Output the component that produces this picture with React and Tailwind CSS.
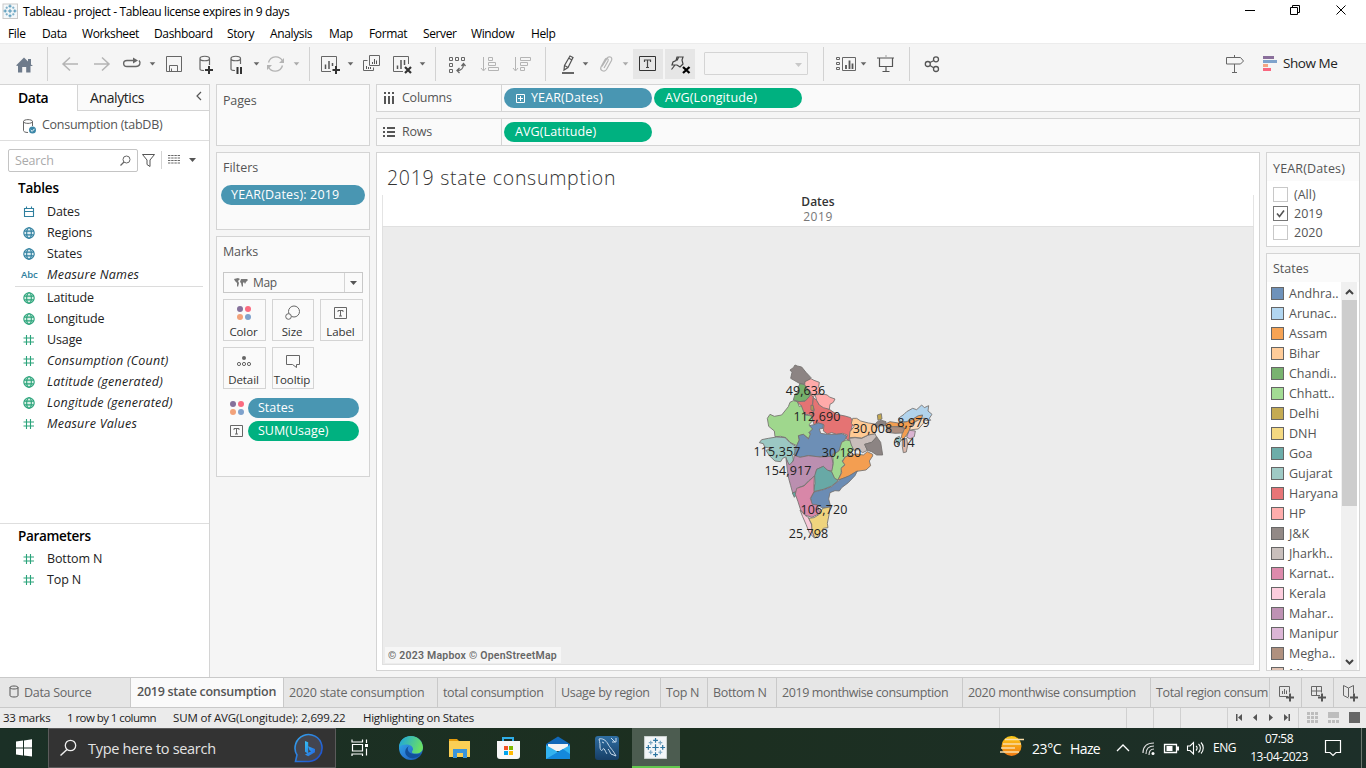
import React from "react";

/* A fixed-size drawing strip whose user units are window pixels. */
function Slice({ x, y, w, h, children, className = "" }) {
  return (
    <svg width={w} height={h} viewBox={`${x} ${y} ${w} ${h}`} fill="none" className={`block shrink-0 ${className}`}>
      {children}
    </svg>
  );
}

const Bar = (p) => <Slice y={43} h={41} {...p} />;
const Caret = ({ x, y = 62, c = "#666" }) => <path d={`M${x + 0.7} ${y + 0.3}h5.600l-2.800 3.300z`} fill={c} />;
const Sep = ({ x }) => <path d={`M${x + 0.5} 47v34`} stroke="#d2d2d2" />;

function TitleBar() {
  return (
    <header className="flex h-6 shrink-0 items-center bg-white">
      <Slice x={0} y={0} w={23} h={24}>
        <rect x="3" y="4" width="14.5" height="14.5" fill="#f4f8fa" stroke="#c9c9c9" />
        <Sparkle cx={10} cy={11} s={0.27} c="#2c7fa8" />
      </Slice>
      <h1 className="grow whitespace-pre text-[12px] leading-6 tracking-[-0.37px] text-black">Tableau - project - Tableau license expires in 9 days</h1>
      <Slice x={1230} y={0} w={136} h={24}>
        <path d="M1245 10.5h10" stroke="#000" />
        <path d="M1290.500 7.500h7v7h-7zM1292.500 7v-1.500h7v7h-2" stroke="#000" />
        <path d="M1336.500 5.500l9 9m0-9l-9 9" stroke="#000" />
      </Slice>
    </header>
  );
}

function Sparkle({ cx, cy, s, c }) {
  return (
    <g transform={`translate(${cx} ${cy}) scale(${s})`} stroke={c} strokeWidth="3">
      <path d="M-8 0h16M0-8v16M-6-18h12M0-24v12M-6 18h12M0 12v12M-24 0h12M-18-6v12M12 0h12M18-6v12" />
      <path d="M-17-12h10M-12-17v10M7-12h10M12-17v10M-17 12h10M-12 7v10M7 12h10M12 7v10" opacity=".6" />
    </g>
  );
}

const menus = [
  ["File", "w-[34px]"], ["Data", "w-10"], ["Worksheet", "w-[72px]"], ["Dashboard", "w-[73px]"], ["Story", "w-[43px]"],
  ["Analysis", "w-[59px]"], ["Map", "w-10"], ["Format", "w-[54px]"], ["Server", "w-12"], ["Window", "w-[60px]"], ["Help", "w-10"],
];

function MenuBar() {
  return (
    <nav className="flex h-[19px] shrink-0 bg-white pl-2 text-[12px] leading-[19px] tracking-[-0.37px] text-black">
      {menus.map(([m, w]) => <span key={m} className={`shrink-0 ${w}`}>{m}</span>)}
    </nav>
  );
}

function Toolbar() {
  return (
    <div className="flex h-[41px] shrink-0 border-t border-[#ececec] bg-[#f5f5f5] [&>svg]:-mt-px">
      <Bar x={0} w={48}>
        <path d="M16 65.500L24 57.500l4 4V59h3v5.500l2 1.500h-2.500v6.500h-4.300V67h-4v5.500H18V66z" fill="#6e7b8b" />
        <Sep x={47} />
      </Bar>
      <Bar x={48} w={112}>
        <path d="M78 64H63m7-6.500L63 64l7 6.500M94 64h15m-7-6.500l7 6.500-7 6.500" stroke="#b4b4b4" strokeWidth="1.500" />
        <path d="M134 60.500h-7c-4.500 0-4.500 6 0 6h9c4 0 5-4 3-6" stroke="#666" strokeWidth="1.400" />
        <path d="M133 57.500l5 3-5 3z" fill="#666" />
        <Caret x={149} />
      </Bar>
      <Bar x={160} w={150}>
        <path d="M166.500 56.500h15v15h-15zM169.500 71v-5.500h8V71M171.500 68.500v2.500" stroke="#666" />
        <path d="M204 70.500c-2.500 0-4-.5-4-1.500V58.500c0-3 9.500-3 9.500 0V65M200 58.500c0 3 9.500 3 9.500 0" stroke="#666" strokeWidth="1.200" />
        <path d="M205 70h8m-4-4v8" stroke="#333" strokeWidth="2" />
        <path d="M235 70.500c-2.500 0-4-.5-4-1.500V58.500c0-3 9.500-3 9.500 0V64M231 58.500c0 3 9.500 3 9.500 0" stroke="#666" strokeWidth="1.200" />
        <path d="M237.500 67v7m3.500-7v7" stroke="#333" strokeWidth="2" />
        <Caret x={253} />
        <path d="M268.500 62.500c2-7 11-7.500 14-1.500m0 4.500c-2 7-11 7.500-14 1.500" stroke="#b4b4b4" strokeWidth="1.400" />
        <path d="M284 58v5h-5zM267 70v-5h5z" fill="#b4b4b4" />
        <Caret x={293} c="#aaa" />
        <Sep x={309} />
      </Bar>
      <Bar x={310} w={126}>
        <path d="M331 71.500h-9.500v-15h15V66" stroke="#666" />
        <path d="M325.500 69v-4.500m3.500 4.500v-8m3.500 5v-3" stroke="#555" strokeWidth="1.500" />
        <path d="M332.500 70h7.500m-4-4v8" stroke="#333" strokeWidth="2" />
        <Caret x={347} />
        <path d="M369.500 55.500h10v10h-10zM367.500 60.500h-4v10h10v-3" stroke="#666" />
        <path d="M372.500 64v-2m2 2v-5m2 5v-3.500M366.500 69v-3m2 3v-2m2 2v-2" stroke="#555" />
        <path d="M403 71.500h-9.500v-15h15V64" stroke="#666" />
        <path d="M397.500 69v-3.500m3.500 3.500v-9m3.500 5v-5" stroke="#555" strokeWidth="1.500" />
        <path d="M405 67l6 6m0-6l-6 6" stroke="#333" strokeWidth="2.200" />
        <Caret x={419} />
        <Sep x={435} />
      </Bar>
      <Bar x={436} w={110}>
        <path d="M449.500 57.500h3v3h-3zM455.500 57.500h3v3h-3zM461.500 57.500h3v3h-3zM449.500 63.500h3v3h-3zM449.500 69.500h3v3h-3z" stroke="#666" />
        <path d="M463.500 64c0 4-2.500 6.500-6 6.500m4-4.500l2-2.500 2 2.500m-6 2l-2.500 2.500 2.500 2.500" stroke="#666" strokeWidth="1.300" />
        <path d="M483.500 57v13m-2.500-2l2.500 3 2.500-3M488.500 57.500h4v3h-4zM488.500 62.500h7v3h-7zM488.500 67.500h10v3h-10z" stroke="#b4b4b4" />
        <path d="M515.500 57v13m-2.500-2l2.500 3 2.500-3M520.500 57.500h10v3h-10zM520.500 62.500h7v3h-7zM520.500 67.500h4v3h-4z" stroke="#b4b4b4" />
        <Sep x={545} />
      </Bar>
      <Bar x={546} w={87}>
        <path d="M570 56l3 1.500-5 10-4 2.500.5-4.500zM564.500 65.500l3.500 2M568.500 58l3.500 2" stroke="#555" strokeWidth="1.200" />
        <path d="M562 73h12" stroke="#666" strokeWidth="2" />
        <Caret x={582} />
        <path d="M602 66.500l5-8c1.500-3 6-1.500 4.500 2l-5 9c-2 3-7 1-5.500-2.500l4-7.500c1.500-2 4-1 3 1.500l-4 7" stroke="#b4b4b4" strokeWidth="1.200" />
        <Caret x={622} c="#aaa" />
      </Bar>
      <Bar x={633} w={71}>
        <path d="M633 49h30v30h-30zM665 49h30v30h-30z" fill="#e6e6e6" />
        <path d="M639.500 56.500h16v14h-16z" stroke="#333" />
        <path d="M644.500 62v-2h6v2m-3-2v7.500m-1.500 0h3" stroke="#444" strokeWidth="1.200" />
        <path d="M677 57h6l-1 3 1 4-3 3-3-2h-5l1-3 3-1.500zM675 65l-3.500 4.500M678.500 57.500l-1.500 3" stroke="#444" strokeWidth="1.200" />
        <path d="M683 67l6.500 6m0-6l-6.500 6" stroke="#e6e6e6" strokeWidth="5" />
        <path d="M683 67l6.500 6m0-6l-6.500 6" stroke="#000" strokeWidth="2.300" />
      </Bar>
      <div className="mt-[8px] flex h-[23px] w-[104px] shrink-0 rounded-[1px] border border-[#d4d4d4] bg-[#f5f5f5]">
        <Slice x={705} y={52} w={102} h={22}><path d="M795 62h7l-3.500 4z" fill="#c8c8c8" /></Slice>
      </div>
      <Bar x={808} w={102}>
        <Sep x={823} />
        <path d="M836.500 57.500h3v2h-3zM836.500 62.500h3v2h-3zM836.500 67.500h3v2h-3zM842.500 57.500h13v13h-13z" stroke="#666" />
        <path d="M846 69v-4m3.500 4v-8.500m3 8.500v-5.500" stroke="#555" strokeWidth="1.800" />
        <Caret x={860} />
        <path d="M877 58h17M879.500 58v8.500h13V58M886 67v4.500M882.500 71.500h7M885.500 56h1" stroke="#555" strokeWidth="1.200" />
        <Sep x={909} />
      </Bar>
      <Bar x={910} w={372} className="mr-[1px]">
        <path d="M930 62.500l4-2M930 65.500l4 2.500" stroke="#555" strokeWidth="1.300" />
        <circle cx="927.800" cy="64" r="2.500" stroke="#555" strokeWidth="1.300" />
        <circle cx="936" cy="59.300" r="2.500" stroke="#555" strokeWidth="1.300" />
        <circle cx="936" cy="69" r="2.500" stroke="#555" strokeWidth="1.300" />
        <path d="M1226.500 57.500h14l3 3.500-3 3h-14zM1234.500 55v2M1234.500 64v8M1232 72.500h5" stroke="#666" />
        <path d="M1263 56h11v3h-11z" fill="#8a6f9b" />
        <path d="M1263 60h14v3h-14z" fill="#7fa3cc" />
        <path d="M1263 64h5v3h-5z" fill="#f4a582" />
        <path d="M1263 68h8v3h-8z" fill="#f9677f" />
      </Bar>
      <span className="text-[13.5px] leading-[39px] tracking-[-0.45px] whitespace-nowrap text-[#222]">Show Me</span>
    </div>
  );
}

const BLUE = "#2f7f9e";
const GREEN = "#2aa37a";

function FieldIcon({ kind, green }) {
  const c = green ? GREEN : BLUE;
  if (kind === "abc") return <span className="w-[26px] shrink-0 text-[9.5px] font-semibold tracking-[-0.1px] text-[#2f7f9e]">Abc</span>;
  return (
    <svg width="12" height="12" viewBox="0 0 12 12" fill="none" stroke={c} strokeWidth="1.100" className="-mt-px mr-[12px] ml-[2px] shrink-0">
      {kind === "date" && <path d="M1.500 2.500h9v8h-9zM1.500 5.500h9M3.500.5v2M8.500.5v2" />}
      {kind === "globe" && <><circle cx="6" cy="6" r="5.200" fill={green ? "#d9f0e5" : "#dcecf2"} /><ellipse cx="6" cy="6" rx="2.300" ry="5.200" /><path d="M1.200 4.100h9.600M1.200 7.900h9.600" /></>}
      {kind === "hash" && <path d="M3.500 1v10M7.500 1v10M.5 4h10.500M.5 8h10.500" />}
    </svg>
  );
}

function Field({ kind, green, italic, children }) {
  return (
    <li className="flex h-[21px] items-center pl-[21px]">
      <FieldIcon kind={kind} green={green} />
      <span className={italic ? "tracking-[0.24px] italic" : "tracking-[-0.12px]"}>{children}</span>
    </li>
  );
}

function DataPane() {
  return (
    <aside className="flex w-[210px] shrink-0 flex-col border-t border-r border-[#d4d4d4] bg-white text-[12.5px] text-[#222]">
      <div className="flex h-[26px] shrink-0">
        <div className="w-[77px] pl-[18px] text-[14px] leading-[26px] font-semibold tracking-[-0.5px] text-black">Data</div>
        <div className="flex grow items-center border-b border-l border-[#d4d4d4] bg-[#fafafa] pl-[12px] text-[14px] tracking-[-0.4px]">
          <span className="grow">Analytics</span>
          <svg width="14" height="12" viewBox="0 0 14 12" fill="none" className="-mt-[3px] mr-[1px] shrink-0"><path d="M7 2L3 6l4 4" stroke="#555" strokeWidth="1.200" /></svg>
        </div>
      </div>
      <div className="flex h-[30px] shrink-0 items-center border-b border-[#dedede] pl-[22px] text-[12.5px] tracking-[-0.27px] text-[#555]">
        <svg width="15" height="16" viewBox="0 0 15 16" fill="none" className="mr-[5px]">
          <path d="M6 14.500c-3 0-4.500-1-4.500-2V3.500c0-2.500 9-2.500 9 0V8M1.500 3.500c0 2.500 9 2.500 9 0" stroke="#666" />
          <circle cx="10.500" cy="12" r="3.500" fill="#3b87a8" /><path d="M8.700 12l1.500 1.400 2.300-2.600" stroke="#fff" />
        </svg>
        Consumption (tabDB)
      </div>
      <div className="flex h-[37px] shrink-0 pt-[8px] pl-2">
        <div className="flex h-[23px] w-[130px] shrink-0 items-center justify-between rounded-[2px] border border-[#c4c4c4] pr-[6px] pl-[6px] tracking-[-0.15px] text-[#aaa]">
          <span className="pt-px">Search</span>
          <svg width="11" height="12" viewBox="0 0 11 12" fill="none" stroke="#666"><circle cx="6.500" cy="4.500" r="3.500" /><path d="M4 7L.5 10.500" strokeWidth="1.300" /></svg>
        </div>
        <Slice x={138} y={149} w={72} h={23}>
          <path d="M142.500 154.500h12l-4.500 5.500v6.500l-3-2v-4.500z" stroke="#555" />
          <path d="M161.500 151v18" stroke="#d4d4d4" />
          <path d="M168 155.500h12M168 158h12M168 160.500h12M168 163h12" stroke="#666" strokeDasharray="2.400 .8" />
          <path d="M189 158h7l-3.500 4z" fill="#555" />
        </Slice>
      </div>
      <h2 className="shrink-0 pl-[18px] text-[13.500px] leading-[21px] font-semibold tracking-[-0.2px] text-black">Tables</h2>
      <ul className="shrink-0 pt-[3px]">
        <Field kind="date">Dates</Field>
        <Field kind="globe">Regions</Field>
        <Field kind="globe">States</Field>
        <Field kind="abc" italic>Measure Names</Field>
      </ul>
      <div className="mr-[6px] ml-[15px] h-px shrink-0 bg-[#dcdcdc]" />
      <ul className="grow pt-[1px]">
        <Field kind="globe" green>Latitude</Field>
        <Field kind="globe" green>Longitude</Field>
        <Field kind="hash" green>Usage</Field>
        <Field kind="hash" green italic>Consumption (Count)</Field>
        <Field kind="globe" green italic>Latitude (generated)</Field>
        <Field kind="globe" green italic>Longitude (generated)</Field>
        <Field kind="hash" green italic>Measure Values</Field>
      </ul>
      <section className="h-[154px] shrink-0 border-t border-[#dedede]">
        <h2 className="pb-px pl-[18px] text-[13.500px] leading-[24px] font-semibold tracking-[-0.32px] text-black">Parameters</h2>
        <ul>
          <Field kind="hash" green>Bottom N</Field>
          <Field kind="hash" green>Top N</Field>
        </ul>
      </section>
    </aside>
  );
}

function ColorDots() {
  return (
    <svg width="16" height="16" viewBox="0 0 16 16" className="shrink-0">
      <circle cx="4" cy="4" r="3" fill="#85719b" /><circle cx="12" cy="4" r="3" fill="#fa6b80" />
      <circle cx="4" cy="12" r="3" fill="#f2a27a" /><circle cx="12" cy="12" r="3" fill="#7fa2cc" />
    </svg>
  );
}

function LabelIcon() {
  return (
    <svg width="16" height="16" viewBox="0 0 16 16" fill="none" stroke="#666" className="shrink-0">
      <path d="M1.500 2.500h12v11h-12z" /><path d="M5 7V5.500h5V7M7.500 5.500V11M6 11h3" />
    </svg>
  );
}

function MarkButton({ label, w, children }) {
  return (
    <div className={`flex h-[42px] flex-col items-center border border-[#d4d4d4] pt-[5px] pr-[2px] ${w}`}>
      {children}
      <span className="mt-[3px] text-[11.5px] leading-[15px] tracking-[-0.1px] whitespace-nowrap text-[#333]">{label}</span>
    </div>
  );
}

function MarksColumn() {
  return (
    <div className="flex w-[154px] shrink-0 flex-col gap-[6px] text-[12.5px] text-[#555]">
      <section className="h-[62px] border border-[#d4d4d4] bg-[#fafafa] pl-[6px] leading-[31px] tracking-[-0.15px]">Pages</section>
      <section className="h-[78px] border border-[#d4d4d4] bg-[#fafafa] px-1">
        <div className="pl-[2px] leading-[30px]">Filters</div>
        <div className="mt-[2px] h-5 rounded-full bg-[#4996b2] pl-[10px] text-[12.5px] leading-5 font-medium tracking-[0.17px] text-white">YEAR(Dates): 2019</div>
      </section>
      <section className="h-[241px] border border-[#d4d4d4] bg-[#fafafa] px-[6px]">
        <div className="leading-[30px] tracking-[-0.15px]">Marks</div>
        <div className="mt-[5px] flex h-[21px] items-center border border-[#c8c8c8] bg-[#fafafa] pl-[10px]">
          <svg width="14" height="10" viewBox="0 0 14 10" className="mr-[5px] shrink-0" fill="#777">
            <path d="M0 1l4-1 2 1-2 2 1 2-1 4-1-1V5L1 3zM7 1l2 0 4 0 1 1-2 2-1 2-1-2-1 1 0 3-1 1-1-4-1-1z" />
          </svg>
          <span className="grow pt-px text-[12px] tracking-[-0.4px]">Map</span>
          <span className="flex h-full w-[18px] items-center justify-center border-l border-[#d4d4d4]">
            <svg width="7" height="4" viewBox="0 0 7 4"><path d="M0 0h7L3.500 4z" fill="#555" /></svg>
          </span>
        </div>
        <div className="mt-[6px] flex flex-wrap gap-[6px]">
          <MarkButton label="Color" w="w-[43px]"><ColorDots /></MarkButton>
          <MarkButton label="Size" w="w-[42px]">
            <svg width="16" height="16" viewBox="0 0 16 16" fill="none" stroke="#666"><circle cx="10" cy="6.500" r="5.500" /><circle cx="4.500" cy="11.500" r="2.800" fill="#fafafa" /></svg>
          </MarkButton>
          <MarkButton label="Label" w="w-[43px]"><LabelIcon /></MarkButton>
          <MarkButton label="Detail" w="w-[43px]">
            <svg width="16" height="16" viewBox="0 0 16 16" fill="none" stroke="#666"><circle cx="8" cy="5" r="2" fill="#666" stroke="none" /><circle cx="3" cy="11" r="1.600" /><circle cx="8" cy="11" r="1.600" /><circle cx="13" cy="11" r="1.600" /></svg>
          </MarkButton>
          <MarkButton label="Tooltip" w="w-[42px]">
            <svg width="16" height="16" viewBox="0 0 16 16" fill="none" stroke="#666"><path d="M2.500 2.500h13v9h-3v3l-4-3h-6z" /></svg>
          </MarkButton>
        </div>
        <div className="mt-[9px] flex items-center gap-[3px] pl-[6px]">
          <ColorDots />
          <div className="h-5 w-[111px] rounded-full bg-[#4996b2] pl-[10px] leading-5 font-medium text-white">States</div>
        </div>
        <div className="mt-[3px] flex items-center gap-[3px] pl-[6px]">
          <LabelIcon />
          <div className="h-5 w-[111px] rounded-full bg-[#00b180] pl-[10px] leading-5 font-medium text-white">SUM(Usage)</div>
        </div>
      </section>
    </div>
  );
}

function Shelf({ label, icon, children }) {
  return (
    <div className="flex h-7 shrink-0 border border-[#d4d4d4] bg-[#fafafa] text-[12.5px] text-[#555]">
      <div className="flex w-[125px] shrink-0 items-center gap-[7px] border-r border-[#d4d4d4] pl-[6px] tracking-[-0.25px]">
        <svg width="12" height="12" viewBox="0 0 12 12" fill="none" stroke="#555" strokeWidth="2" className="-mt-px shrink-0"><path d={icon} /></svg>
        {label}
      </div>
      <div className="flex items-center gap-[2px] pl-[2px]">{children}</div>
    </div>
  );
}

const Pill = ({ color, children }) => (
  <div className={`flex h-5 w-[148px] items-center rounded-full pl-[11px] text-[12.5px] font-medium tracking-[0.12px] text-white ${color}`}>{children}</div>
);

const states = [
  ["#8c8483", "165,30 172,33 185,36 198,52 213,68 208,74 195,80 193,88 180,86 152,70 156,52 150,45 160,38"],
  ["#ffaaa9", "195,80 213,71 222,76 238,82 236,95 242,108 232,120 225,118 218,130 208,112 200,98 194,90"],
  ["#76b06c", "180,86 193,89 205,108 213,112 208,125 198,137 178,140 160,135 165,118 175,110 174,98"],
  ["#e57373", "170,140 195,139 208,125 213,118 220,128 218,148 223,165 215,183 205,178 195,180 190,168 185,165 184,152"],
  ["#e57373", "220,128 230,136 238,150 268,163 290,178 315,183 332,188 340,200 336,215 332,232 326,257 318,250 322,240 308,235 290,238 275,233 262,237 250,228 252,210 235,204 222,209 218,195 215,183 223,165 218,148"],
  ["#ffaaa9", "225,118 232,119 248,117 262,120 268,126 285,132 280,142 270,148 268,163 250,158 238,150 230,136"],
  ["#9fd78d", "160,137 172,140 178,155 184,152 190,168 196,180 215,183 218,197 208,208 218,222 207,233 212,240 208,252 190,238 175,243 178,255 170,272 150,262 138,248 122,244 105,245 103,228 86,214 82,190 90,178 103,184 125,180 145,155 150,142"],
  ["#9bc8c3", "65,254 85,250 110,246 135,248 150,263 167,274 163,284 172,290 158,300 160,315 152,330 143,326 138,306 128,310 122,320 105,318 88,302 78,286 95,281 74,276 70,266 58,263"],
  ["#6d8fb6", "212,235 207,233 218,222 208,212 222,209 235,204 250,208 249,220 238,222 242,235 262,238 290,238 305,236 320,243 314,256 305,262 303,278 292,292 278,297 276,308 258,303 240,306 205,302 180,307 163,300 165,286 172,268 178,255 175,242 190,238 205,252"],
  ["#bb8fb0", "138,310 148,330 160,318 163,301 180,307 205,302 240,306 275,304 279,325 277,348 262,346 250,334 230,343 226,362 205,378 192,392 175,398 168,410 158,414 152,392 146,370 142,345"],
  ["#5fa8a2", "157,414 166,411 168,421 163,427"],
  ["#68a9a6", "230,343 250,334 262,345 276,351 284,368 294,377 275,393 250,403 220,410 225,385 224,362"],
  ["#a0d890", "305,262 318,255 335,258 341,274 339,286 330,298 318,305 306,318 315,328 305,338 303,356 294,375 284,370 275,350 280,325 278,300 297,288"],
  ["#c9bebb", "328,250 345,248 365,250 385,240 405,236 410,247 395,262 374,268 382,286 368,293 355,284 342,286 334,270"],
  ["#f39e51", "315,306 335,300 350,297 370,300 382,290 398,298 398,303 388,318 392,332 378,345 350,349 325,365 294,375 305,353 303,340 315,330 308,320"],
  ["#6b8cb4", "352,348 345,362 325,383 305,398 298,408 285,407 270,413 266,432 272,455 250,460 230,450 216,450 212,430 222,411 250,404 275,395 300,374 328,362"],
  ["#d887a8", "223,363 222,390 222,410 211,430 217,448 232,450 240,475 215,487 195,480 182,465 174,440 166,418 170,400 192,393"],
  ["#f8c9da", "180,465 195,481 206,488 215,510 218,530 222,548 208,533 198,508 188,485"],
  ["#efd47e", "270,456 267,480 262,505 264,518 250,520 240,535 225,550 216,528 215,507 206,490 222,488 238,478 248,460"],
  ["#ffca94", "338,190 350,190 362,198 385,204 405,207 410,218 405,236 385,240 365,249 345,247 328,248 330,230 342,215 334,205"],
  ["#8c8483", "405,208 412,200 424,196 438,200 438,212 418,213 410,220"],
  ["#8c8483", "410,245 422,262 428,300 410,300 395,290 382,286 374,268 395,262"],
  ["#c2a74e", "412,180 424,176 426,192 414,196"],
  ["#c2a74e", "213,150 220,153 219,168 213,165"],
  ["#f39e51", "436,207 450,200 475,204 500,200 520,190 535,182 550,180 545,190 525,200 513,212 508,226 500,240 490,252 484,248 488,228 494,220 480,214 440,218"],
  ["#ab8d7e", "438,217 460,215 480,216 494,220 488,234 465,235 442,232"],
  ["#b1d3ec", "475,190 492,178 500,170 518,160 530,164 545,150 553,158 566,152 564,168 576,178 568,190 572,196 558,196 545,190 548,180 535,182 512,196 498,200 482,200"],
  ["#f9dbbd", "545,190 556,190 550,205 535,222 515,224 508,226 513,212 527,200"],
  ["#dab4d2", "508,226 526,228 523,245 510,252 500,246"],
  ["#9bc8c3", "466,250 478,244 484,255 474,270"],
  ["#dcb9ab", "487,254 500,250 503,270 499,291 490,293 487,275"],
];

const labels = [
  ["49,636", 65.500, 40], ["112,690", 77, 66], ["30,008", 132.500, 78], ["8,979", 173.500, 72], ["614", 164, 92],
  ["115,357", 37, 101], ["30,180", 101.500, 102], ["154,917", 48, 120], ["106,720", 84, 159], ["25,798", 68.500, 183],
];

function IndiaMap() {
  return (
    <svg width="210" height="190" viewBox="0 0 210 190" className="absolute top-[128px] left-[357px] overflow-visible">
      <g transform="scale(.333333)" stroke="#75726f" strokeWidth="2.600" strokeLinejoin="round">
        {states.map(([c, p], i) => <polygon key={i} fill={c} points={p} />)}
      </g>
      <g fill="#222" textAnchor="middle" className="text-[12.500px] tracking-[0.1px]">
        {labels.map(([t, x, y]) => <text key={t} x={x} y={y}>{t}</text>)}
      </g>
    </svg>
  );
}

function Sheet() {
  return (
    <section className="flex w-[884px] shrink-0 flex-col border border-[#d4d4d4] bg-white pr-[5px] pl-[5px]">
      <h2 className="h-[42px] shrink-0 pt-[11px] pl-[5px] text-[19.5px] leading-7 font-light tracking-[0.72px] text-[#333]">2019 state consumption</h2>
      <div className="flex h-[31px] shrink-0 flex-col items-center border-x border-[#e4e4e4] leading-[15px]">
        <span className="-mt-px text-[12px] font-semibold text-[#333]">Dates</span>
        <span className="text-[12px] tracking-[0.55px] text-[#777]">2019</span>
      </div>
      <div className="relative flex h-[439px] flex-col justify-end border border-[#e0e0e0] bg-[#ececec]">
        <IndiaMap />
        <div className="mb-[1px] ml-[2px] h-[16px] w-[176px] bg-[#f6f6f6] pl-[3px] text-[10.5px] leading-[17px] font-semibold tracking-[0.22px] whitespace-nowrap text-[#666] font-['Roboto',sans-serif]">© 2023 Mapbox © OpenStreetMap</div>
      </div>
    </section>
  );
}

const legend = [
  ["Andhra..", "bg-[#6f92ba]"], ["Arunac..", "bg-[#b2d6f0]"], ["Assam", "bg-[#f6a354]"], ["Bihar", "bg-[#ffcc99]"],
  ["Chandi..", "bg-[#79b370]"], ["Chhatt..", "bg-[#a3dc94]"], ["Delhi", "bg-[#c5ab53]"], ["DNH", "bg-[#f4d982]"],
  ["Goa", "bg-[#6dada9]"], ["Gujarat", "bg-[#9fcac5]"], ["Haryana", "bg-[#e77577]"], ["HP", "bg-[#ffadac]"],
  ["J&K", "bg-[#928986]"], ["Jharkh..", "bg-[#c9bfbc]"], ["Karnat..", "bg-[#dd8bac]"], ["Kerala", "bg-[#fccddd]"],
  ["Mahar..", "bg-[#be92b4]"], ["Manipur", "bg-[#dcb6d6]"], ["Megha..", "bg-[#b0917f]"], ["Mizora..", "bg-[#dfc1b2]"],
];

function RightCards() {
  return (
    <div className="flex w-[94px] shrink-0 flex-col gap-[6px] text-[12.5px] text-[#555]">
      <section className="h-[95px] shrink-0 border border-[#d4d4d4] bg-white">
        <div className="h-[28px] bg-[#fafafa] pl-[6px] leading-[31px] tracking-[0.15px]">YEAR(Dates)</div>
        <div className="flex flex-col gap-[4px] pt-[6px] pl-[6px]">
          {["(All)", "2019", "2020"].map((t) => (
            <div key={t} className="flex h-[15px] items-center gap-[6px]">
              <span className={`flex size-[15px] items-center justify-center border bg-white ${t === "2019" ? "border-[#777]" : "border-[#c8c8c8]"}`}>
                {t === "2019" && <svg width="9" height="9" viewBox="0 0 9 9" fill="none"><path d="M1 4.500l2.500 3L8 1.500" stroke="#555" strokeWidth="1.600" /></svg>}
              </span>
              <span className="pt-px">{t}</span>
            </div>
          ))}
        </div>
      </section>
      <section className="flex min-h-0 grow flex-col border border-[#d4d4d4] bg-white">
        <div className="h-[28px] shrink-0 bg-[#fafafa] pl-[6px] leading-[30px]">States</div>
        <div className="flex min-h-0 grow">
          <ul className="w-[74px] overflow-hidden pt-[2px] pl-[4px]">
            {legend.map(([t, c]) => (
              <li key={t} className="flex h-5 items-center gap-[5px] whitespace-nowrap">
                <span className={`-mt-px size-[13px] shrink-0 border border-[#666] ${c}`} />{t}
              </li>
            ))}
          </ul>
          <div className="flex w-4 flex-col items-center bg-[#f0f0f0]">
            <svg width="15" height="18" viewBox="0 0 15 18" fill="none" className="shrink-0"><path d="M4 12l3.500-3.500L11 12" stroke="#444" strokeWidth="2" /></svg>
            <div className="h-[206px] w-[15px] shrink-0 bg-[#cdcdcd]" />
            <div className="grow" />
            <svg width="15" height="17" viewBox="0 0 15 17" fill="none" className="shrink-0"><path d="M4 7l3.500 3.500L11 7" stroke="#444" strokeWidth="2" /></svg>
          </div>
        </div>
      </section>
    </div>
  );
}

const tabs = [
  ["2020 state consumption", "w-[154px] tracking-[-0.24px]"], ["total consumption", "w-[118px] tracking-[-0.36px]"], ["Usage by region", "w-[105px] tracking-[-0.32px]"],
  ["Top N", "w-[47px] tracking-[-0.3px]"], ["Bottom N", "w-[69px] tracking-[-0.35px]"], ["2019 monthwise consumption", "w-[186px] tracking-[-0.4px]"],
  ["2020 monthwise consumption", "w-[188px] tracking-[-0.34px]"], ["Total region consum", "w-[119px] tracking-[-0.38px]"],
];

function SheetTabs() {
  return (
    <div className="flex h-[31px] shrink-0 border-y border-[#c9c9c9] bg-[#e6e6e6] text-[12.5px] leading-[29px] text-[#666]">
      <div className="flex w-[131px] shrink-0 items-center gap-[4px] border-r border-[#c9c9c9] pl-[9px] tracking-[-0.3px]">
        <svg width="11" height="13" viewBox="0 0 11 13" fill="none" stroke="#555" className="-mt-[2px]"><path d="M1 2.500v8c0 2 8 2 8 0v-8M1 2.500c0-2 8-2 8 0s-8 2-8 0z" /></svg>
        Data Source
      </div>
      <div className="w-[153px] shrink-0 border-r border-[#c9c9c9] bg-[#fafafa] pl-[6px] text-[12.5px] leading-[27px] font-semibold tracking-[-0.27px] whitespace-nowrap text-[#555]">2019 state consumption</div>
      {tabs.map(([t, w]) => <div key={t} className={`shrink-0 overflow-hidden border-r border-[#c9c9c9] pl-[5px] whitespace-nowrap ${w}`}>{t}</div>)}
      <Slice x={1270} y={678} w={96} h={29}>
        <path d="M1301.500 678v29M1333.500 678v29" stroke="#c9c9c9" />
        <path d="M1288 696.500h-8.500v-10h10v6M1282.500 694v-3m2 3v-5m2 5v-3.500" stroke="#666" />
        <path d="M1286 697.500h8m-4-4v8" stroke="#555" strokeWidth="2" />
        <path d="M1320 695.500h-8.500v-9h10v6M1316.500 686.500v9M1311.500 691h10" stroke="#666" />
        <path d="M1318 697.500h8m-4-4v8" stroke="#555" strokeWidth="2" />
        <path d="M1348.500 697v-9l-5-2.500v10l5 2.500M1348.500 688l5-2.500v8" stroke="#666" />
        <path d="M1350 697.500h8m-4-4v8" stroke="#555" strokeWidth="2" />
      </Slice>
    </div>
  );
}

function StatusBar() {
  return (
    <footer className="flex h-5 shrink-0 bg-[#ebebeb] pl-[3px] text-[11.5px] leading-5 text-[#222]">
      <span className="w-16 tracking-[-0.25px]">33 marks</span>
      <span className="w-[106px] tracking-[-0.56px]">1 row by 1 column</span>
      <span className="w-[190px] tracking-[-0.12px]">SUM of AVG(Longitude): 2,699.22</span>
      <span className="grow tracking-[-0.27px]">Highlighting on States</span>
      <Slice x={999} y={708} w={367} h={20}>
        <path d="M999.500 708v20M1126.500 708v20M1153.500 708v20M1180.500 708v20M1227.500 708v20M1298.500 708v20" stroke="#d0d0d0" />
        <path d="M1236 714h1.500v7H1236zM1242 714v7l-4-3.500zM1257 714v7l-4-3.500zM1269 714v7l4-3.500zM1284 714v7l4-3.500zM1288.500 714h1.500v7h-1.500z" fill="#555" />
        <path d="M1307 712h3v3h-3zM1311 712h3v3h-3zM1315 712h3v3h-3zM1307 716h3v3h-3zM1311 716h3v3h-3zM1315 716h3v3h-3zM1307 720h3v3h-3zM1311 720h3v3h-3zM1315 720h3v3h-3zM1328 712h11v6h-11zM1328 720h3v3h-3zM1332 720h3v3h-3zM1336 720h3v3h-3z" fill="#bdbdbd" />
        <path d="M1349 712h11v11h-11z" fill="#666" />
      </Slice>
    </footer>
  );
}

function TaskBar() {
  return (
    <div className="flex h-10 shrink-0 bg-linear-to-r from-[#1b3026] via-[#1c2f20] to-[#1d2f29] text-white">
      <Slice x={0} y={728} w={48} h={40}>
        <path d="M16 741.500l7-1v7h-7zM24 740.400l8-1.200v8.300h-8zM16 748.500h7v7l-7-1zM24 748.500h8v8l-8-1.100z" fill="#fff" />
      </Slice>
      <div className="flex w-72 shrink-0 items-center border border-[#5b5b5b] bg-[#333] text-[14.5px] text-[#e4e4e4]">
        <Slice x={49} y={729} w={39} h={38}>
          <circle cx="70.500" cy="745.500" r="5.200" stroke="#eee" strokeWidth="1.300" /><path d="M67 749.500l-6.500 6" stroke="#eee" strokeWidth="1.500" />
        </Slice>
        <span className="grow pt-px tracking-[-0.3px]">Type here to search</span>
        <svg width="30" height="30" viewBox="0 0 30 30" fill="none" className="mr-[11px] shrink-0">
          <defs>
            <linearGradient id="ring" x1="0" y1="0" x2="1" y2="1"><stop stopColor="#35a7f0" /><stop offset="1" stopColor="#1c46c8" /></linearGradient>
            <linearGradient id="bee" x1="0" y1="0" x2="1" y2="1"><stop stopColor="#35c1f5" /><stop offset="1" stopColor="#2461df" /></linearGradient>
          </defs>
          <path d="M1.500 28.500l1.500-6.500a13.500 13.500 0 1 1 12 6.500z" fill="#43454f" stroke="url(#ring)" strokeWidth="1.600" />
          <path d="M11 8l3.200 1.200v11.500L11 18.800zM14.200 13.300l6.800 2.700v3.200l-6.800 4-3.200-1.700 6.200-3.300-1.800-.9z" fill="url(#bee)" />
        </svg>
      </div>
      <Slice x={336} y={728} w={296} h={40}>
        <defs>
          <linearGradient id="edge" x1="0" y1="0" x2="1" y2="1"><stop stopColor="#30b6e8" /><stop offset=".5" stopColor="#2a7fd8" /><stop offset="1" stopColor="#1551a8" /></linearGradient>
          <linearGradient id="edgeTop" x1="0" y1="0" x2="1" y2=".3"><stop stopColor="#1ba2e2" /><stop offset="1" stopColor="#68df66" /></linearGradient>
          <linearGradient id="mysql" x1="0" y1="0" x2="0" y2="1"><stop stopColor="#2f6ea2" /><stop offset="1" stopColor="#173e66" /></linearGradient>
        </defs>
        <path d="M352 739.500v2.500h10.500v-2.500M352.500 744.500h10v6.500h-10zM352 756v-2h10.500v2M366.500 739.500v3.500M366.500 748.500v7" stroke="#fff" strokeWidth="1.200" />
        <path d="M365 744h3v3h-3z" fill="#fff" />
        <circle cx="411" cy="748" r="12" fill="url(#edge)" />
        <path d="M399 747c1-14 22-15 24 0 .3 5-4 7-9 6.500-3-.5-2-2-1-4 .5-5-9-7-14-2.500z" fill="url(#edgeTop)" />
        <path d="M409 746c-3 3-1 10 12 8-3 4-10 6-14 2-3-3-2-8 2-10z" fill="#12509b" />
        <path d="M449 739h8l2 2h-10z" fill="#e59b0c" /><path d="M449 741h21v16h-21z" fill="#fbcf55" /><path d="M453 758v-9h14v9h-4v-5h-6v5z" fill="#3b95dc" />
        <path d="M503 742v-4h10v4" stroke="#2faee8" strokeWidth="2" />
        <path d="M497 741h23v15c0 2-1 3-3 3h-17c-2 0-3-1-3-3z" fill="#f7f7f7" />
        <path d="M504 746h4v4h-4z" fill="#f25022" /><path d="M509 746h4v4h-4z" fill="#7fba00" /><path d="M504 751h4v4h-4z" fill="#00a4ef" /><path d="M509 751h4v4h-4z" fill="#ffb900" />
        <path d="M546 744l12-7.500 12 7.500v2h-24z" fill="#1168b8" /><path d="M548 744h20v7h-20z" fill="#f4f4f4" /><path d="M546 745l12 7 12-7v14h-24z" fill="#33b3ef" /><path d="M546 759l17-10 7 5v5z" fill="#1489dc" />
        <rect x="595" y="736" width="24" height="24" rx="3" fill="url(#mysql)" />
        <path d="M599 739c3-1 7 1 9 5 2 4 5 6 8 12l-5-2c-1-1-1-3-3-5M599 739c1 4 1 5 1 8s2 5 3 2c1-2 2 2 4 5M602 742l2 1M611 738l4 4m1-4v4h-4" stroke="#c9dced" strokeWidth="1" />
      </Slice>
      <Slice x={632} y={728} w={48} h={40} className="border-b-2 border-[#62c74e] bg-[#4c5c50]">
        <rect x="644" y="737" width="23" height="23" fill="#f3f6f8" stroke="#cfd6d4" />
        <Sparkle cx={655.5} cy={748.5} s={0.42} c="#2c74a0" />
      </Slice>
      <div className="grow" />
      <Slice x={996} y={728} w={36} h={40}>
        <defs><linearGradient id="sun" x1="0" y1="0" x2="0" y2="1"><stop stopColor="#fcc916" /><stop offset="1" stopColor="#ef7a13" /></linearGradient></defs>
        <circle cx="1011.500" cy="746" r="10" fill="url(#sun)" />
        <path d="M1005 739.500h19M1003 744h18M1001 748h14M1000 752h19" stroke="#f9dda8" strokeWidth="1.600" />
      </Slice>
      <span className="w-[38px] pt-px text-[14px] leading-10 tracking-[-0.4px]">23°C</span>
      <span className="w-[42px] pt-px text-[14px] leading-10 tracking-[-0.6px]">Haze</span>
      <Slice x={1112} y={728} w={101} h={40}>
        <path d="M1117 751l6-6 6 6" stroke="#fff" strokeWidth="1.300" />
        <path d="M1143 753c0-7 4-10 11-10M1146 754c0-6 3-8 8-8M1149 755c0-4 2-6 5-6" stroke="#ddd" strokeWidth="1.200" /><circle cx="1153" cy="753.500" r="1.500" fill="#fff" />
        <path d="M1164.500 744.500h12v8h-12z" stroke="#fff" strokeWidth="1.300" /><path d="M1166.500 746h6v5h-6zM1177 746.500h2v4h-2z" fill="#fff" />
        <path d="M1187.500 746h2.500l3.500-3.500v11.500l-3.500-3.500h-2.500zM1196 746c1.500 1 1.500 3 0 4.500M1198.500 744c2.500 2 2.500 6 0 8.500M1201 742.500c3 3 3 8 0 11" stroke="#fff" strokeWidth="1.100" />
      </Slice>
      <span className="w-[36px] text-[12px] leading-10 tracking-[-0.5px]">ENG</span>
      <div className="flex w-[60px] shrink-0 flex-col items-center pt-[2px] text-[12px] leading-[18px] tracking-[-0.5px] whitespace-nowrap"><span>07:58</span><span>13-04-2023</span></div>
      <Slice x={1309} y={728} w={57} h={40}>
        <path d="M1325.500 740.500h15v12h-4.500l-3 3-3-3h-4.500z" stroke="#fff" strokeWidth="1.200" />
        <path d="M1361.500 728v40" stroke="#6c776f" />
      </Slice>
    </div>
  );
}

export default function App() {
  return (
    <div className="flex h-[768px] w-[1366px] flex-col overflow-hidden bg-[#f5f5f5] font-['Open_Sans','Noto_Sans',sans-serif]">
      <TitleBar />
      <MenuBar />
      <Toolbar />
      <main className="flex h-[593px] shrink-0 gap-[6px]">
        <DataPane />
        <MarksColumn />
        <div className="flex w-[984px] shrink-0 flex-col gap-[6px] pb-[6px]">
          <Shelf label="Columns" icon="M2 0v2M2 4v8M6 0v2M6 4v8M10 0v2M10 4v8">
            <Pill color="bg-[#4996b2]">
              <svg width="9" height="9" viewBox="0 0 9 9" fill="none" stroke="#fff" className="mr-[6px] ml-[1px]"><path d="M.5.500h8v8h-8zM2 4.500h5M4.500 2v5" /></svg>
              YEAR(Dates)
            </Pill>
            <Pill color="bg-[#00b180]">AVG(Longitude)</Pill>
          </Shelf>
          <Shelf label="Rows" icon="M0 2h2M4 2h8M0 6h2M4 6h8M0 10h2M4 10h8"><Pill color="bg-[#00b180]">AVG(Latitude)</Pill></Shelf>
          <div className="flex min-h-0 grow gap-[6px]">
            <Sheet />
            <RightCards />
          </div>
        </div>
      </main>
      <SheetTabs />
      <StatusBar />
      <TaskBar />
    </div>
  );
}
